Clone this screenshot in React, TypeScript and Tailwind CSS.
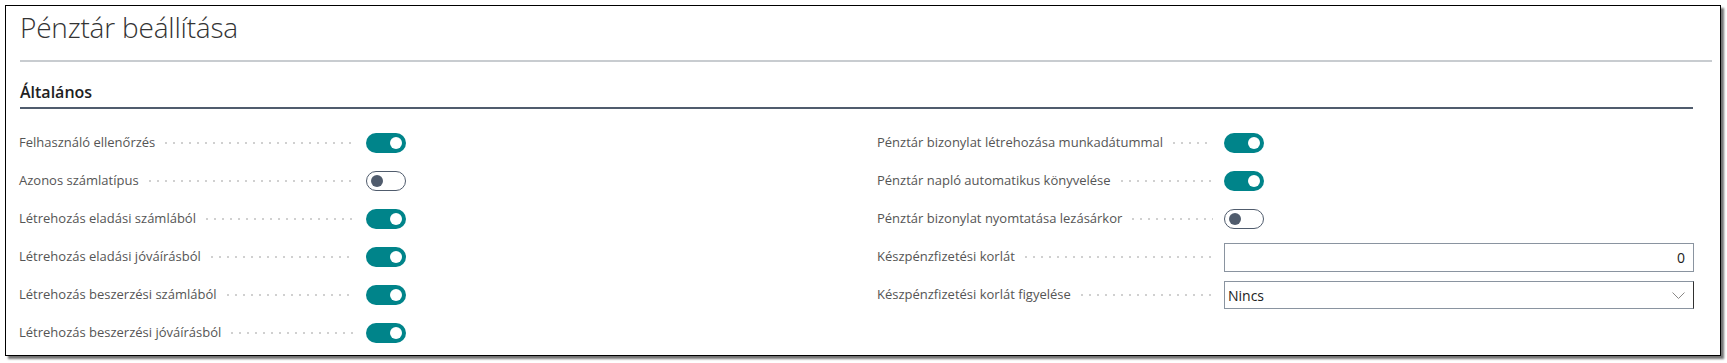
import React from 'react';

const font = { fontFamily: '"Open Sans", "Noto Sans", Arial, sans-serif' };

type Field =
  | { label: string; kind: 'toggle'; on: boolean }
  | { label: string; kind: 'number'; value: string }
  | { label: string; kind: 'select'; value: string };

const leftFields: Field[] = [
  { label: 'Felhasználó ellenőrzés', kind: 'toggle', on: true },
  { label: 'Azonos számlatípus', kind: 'toggle', on: false },
  { label: 'Létrehozás eladási számlából', kind: 'toggle', on: true },
  { label: 'Létrehozás eladási jóváírásból', kind: 'toggle', on: true },
  { label: 'Létrehozás beszerzési számlából', kind: 'toggle', on: true },
  { label: 'Létrehozás beszerzési jóváírásból', kind: 'toggle', on: true },
];

const rightFields: Field[] = [
  { label: 'Pénztár bizonylat létrehozása munkadátummal', kind: 'toggle', on: true },
  { label: 'Pénztár napló automatikus könyvelése', kind: 'toggle', on: true },
  { label: 'Pénztár bizonylat nyomtatása lezásárkor', kind: 'toggle', on: false },
  { label: 'Készpénzfizetési korlát', kind: 'number', value: '0' },
  { label: 'Készpénzfizetési korlát figyelése', kind: 'select', value: 'Nincs' },
];

function Toggle({ on }: { on: boolean }) {
  if (on) {
    return (
      <div className="w-[40px] h-[20px] rounded-full bg-[#00848a] flex items-center justify-end pr-[4px]">
        <div className="w-[12px] h-[12px] rounded-full bg-white" />
      </div>
    );
  }
  return (
    <div className="w-[40px] h-[20px] rounded-full border border-[#505c6d] bg-white flex items-center pl-[4px]">
      <div className="w-[12px] h-[12px] rounded-full bg-[#505c6d]" />
    </div>
  );
}

function FieldRow({ field }: { field: Field }) {
  return (
    <div className="h-[38px] flex items-center">
      {/* label + dotted leader */}
      <div className="w-[347px] flex items-center pr-[11px]">
        <span className="text-[13px] text-[#555555] whitespace-nowrap">{field.label}</span>
        <div className="flex-1 ml-[7px] h-[4px] bg-[radial-gradient(circle,#d0d0d0_1px,transparent_1.3px)] bg-[length:8px_4px] bg-repeat-x" />
      </div>
      <div className="w-[470px] flex items-center">
        {field.kind === 'toggle' && <Toggle on={field.on} />}
        {field.kind === 'number' && (
          <div className="w-full h-[29px] border border-[#8a94a0] flex items-center justify-end pr-[8px] text-[14px] text-[#212121]">
            {field.value}
          </div>
        )}
        {field.kind === 'select' && (
          <div className="w-full h-[28px] border border-[#8a94a0] border-r-[#323130] flex items-center justify-between pl-[3px] pr-[8px] text-[14px] text-[#212121]">
            <span>{field.value}</span>
            <svg width="13" height="7" viewBox="0 0 13 7" fill="none">
              <path d="M0.5 0.5l6 6 6-6" stroke="#8a8886" strokeWidth="1" />
            </svg>
          </div>
        )}
      </div>
    </div>
  );
}

export default function App() {
  return (
    <div className="w-[1727px] h-[363px] bg-white pt-[5px] pl-[5px]" style={font}>
      <div className="w-[1716px] h-[351px] border border-black bg-white shadow-[3px_3px_2px_rgba(0,0,0,0.55)] pl-[14px] pr-[8px]">
        {/* Page title */}
        <h1 className="text-[28px] font-light text-[#333333] leading-[38px] pt-[2px] tracking-[-0.2px]">
          Pénztár beállítása
        </h1>
        <div className="mt-[14px] h-[2px] bg-[#c8ccd0]" />

        {/* Section header */}
        <div className="mr-[19px]">
          <h2 className="mt-[19px] text-[16px] font-semibold text-[#212121] leading-[22px]">Általános</h2>
          <div className="mt-[4px] h-[2px] bg-[#505c6d]" />
        </div>

        {/* Fields */}
        <div className="mt-[15px] -ml-[1px] flex gap-[41px]">
          <div className="flex flex-col">
            {leftFields.map((f) => (
              <FieldRow key={f.label} field={f} />
            ))}
          </div>
          <div className="flex flex-col">
            {rightFields.map((f) => (
              <FieldRow key={f.label} field={f} />
            ))}
          </div>
        </div>
      </div>
    </div>
  );
}
